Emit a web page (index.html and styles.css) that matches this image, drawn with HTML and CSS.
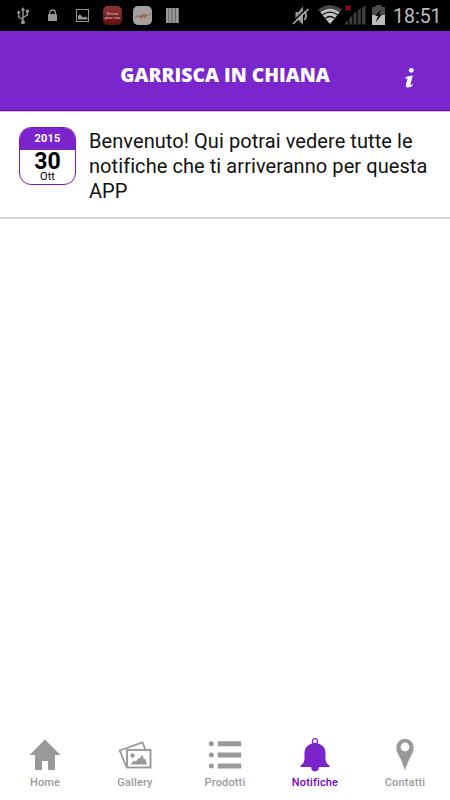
FILE: index.html
```html
<!DOCTYPE html>
<html lang="it">
<head>
    <meta charset="UTF-8">
    <meta name="viewport" content="width=device-width, initial-scale=1.0">
    <title>Garrisca in Chiana</title>
    <link rel="stylesheet" href="styles.css">
</head>
<body>
    <!-- Status Bar -->
    <div class="status-bar">
        <div class="status-left">
            <svg width="30" height="31" viewBox="0 0 30 31">
                <g fill="none" stroke="#969696" stroke-width="1.400">
                    <path d="M15 10v12M15 19.500l-4.300-2.500v-4M15 17.500l4.300-2.500v-4"/>
                </g>
                <g fill="#969696">
                    <path d="M15 7l2.200 3.500h-4.400z"/>
                    <circle cx="15" cy="22.200" r="2"/>
                    <circle cx="10.700" cy="12.300" r="1.500"/>
                    <path d="M17.900 9.800h2.900v2.900h-2.900z"/>
                </g>
            </svg>
            <svg width="30" height="31" viewBox="0 0 30 31">
                <rect x="10" y="14" width="9" height="7" rx="0.6" fill="#969696"/>
                <path d="M11.700 14.500v-1.700a2.800 2.800 0 0 1 5.600 0v1.700" fill="none" stroke="#969696" stroke-width="1.300"/>
            </svg>
            <svg width="30" height="31" viewBox="0 0 30 31">
                <rect x="8.500" y="9.500" width="12" height="12" fill="none" stroke="#969696"/>
                <path d="M10 19.500v-4l2-1 3 3 2-1 2.500 1.500v1.500z" fill="#969696"/>
            </svg>
            <svg width="30" height="31" viewBox="0 0 30 31">
                <defs>
                    <linearGradient id="redApp" x2="0" y2="1">
                        <stop offset="0" stop-color="#91343a"/>
                        <stop offset="1" stop-color="#600f10"/>
                    </linearGradient>
                </defs>
                <rect x="5" y="6" width="19" height="19" rx="5" fill="url(#redApp)"/>
                <text class="app-text" x="14.500" y="14.500">Deluxe</text>
                <text class="app-text" x="14.500" y="18.500">pour vos</text>
            </svg>
            <svg width="30" height="31" viewBox="0 0 30 31">
                <rect x="5" y="6" width="19" height="19" rx="5" fill="#a3a1a0"/>
                <path d="M11 17l1.500-2 1.500.5.5-3 1.500 2 2-1 .5 2.500-1 3-2-1.500-2 1.500z" fill="#c0703a"/>
                <path d="M7 17.500l3-2v1.500l3-1.500v2l3-3v2l3-1.500v1l4-2.500" fill="none" stroke="#6e5f59" stroke-width="0.700"/>
            </svg>
            <svg width="30" height="31" viewBox="0 0 30 31">
                <path d="M8 8h13v15h-13z" fill="#666"/>
                <path d="M8 8h2.300v15h-2.300zM11.200 8h2.300v15h-2.300zM14.600 8h2.300v15h-2.300zM18 8h2.300v15h-2.300z" fill="#999"/>
            </svg>
        </div>
        <div class="status-right">
            <svg width="18" height="31" viewBox="0 0 18 31">
                <path d="M3.500 12h3l4.500-5.500v18.500l-4.500-5h-3z" fill="#9a9a9a"/>
                <path d="M12.500 11q3 4.500 0 9" fill="none" stroke="#9a9a9a" stroke-width="2"/>
                <path d="M0 22.500L15.500 7.500" stroke="#000" stroke-width="1.500"/>
                <path d="M1 24L16.500 9" stroke="#b0b0b0" stroke-width="1.500"/>
            </svg>
            <svg width="24" height="31" viewBox="0 0 24 31">
                <path d="M0 9.500Q12 1 24 9.500L12 24z" fill="#484848"/>
                <path d="M2.500 12.500Q12 5 21.500 12.500L12 24z" fill="#c2c2c2"/>
                <path d="M4.500 14.700Q12 9.500 19.500 14.700M7.500 18.200Q12 14.800 16.500 18.200" fill="none" stroke="#111" stroke-width="1.300"/>
            </svg>
            <svg class="signal" width="21" height="31" viewBox="0 0 21 31">
                <path d="M0 24.500v-1.500l3-3v4.500zM4.200 24.500v-6l3-3v9zM8.500 24.500v-10.500l3-3v13.500zM12.800 24.500v-14l3-3v17zM17 24.500v-16.500l3.500-3v19.500z" fill="#3c3c3c"/>
                <path d="M.5 5.500l5 5M5.500 5.500l-5 5" stroke="#b50d0d" stroke-width="1.500"/>
            </svg>
            <svg class="battery" width="13" height="31" viewBox="0 0 13 31">
                <path d="M0 7h3.500v-2h6v2h3.500v8h-13z" fill="#4c4c4c"/>
                <path d="M0 15h13v10h-13z" fill="#bcbcbc"/>
                <path d="M9.500 9L3 16h3l-2.500 6.500L10 14.500H7z" fill="#111"/>
            </svg>
            <span class="clock">18:51</span>
        </div>
    </div>

    <!-- Header -->
    <div class="header">
        <h1>GARRISCA IN CHIANA</h1>
        <svg class="info" width="12" height="22" viewBox="0 0 12 22">
            <circle cx="7.300" cy="3.300" r="2.400" fill="#fff"/>
            <path d="M1 10.500Q3.500 8.800 8.800 8.500L6.500 17.300Q6.300 18.700 8.700 17.200L9 18.200Q6.500 20.500 3.600 20.500Q1.200 20.500 1.900 17.500L3.400 12Q3.600 11 1.200 11.500z" fill="#fff"/>
        </svg>
    </div>

    <!-- Notification List -->
    <div class="content">
        <div class="notification">
            <div class="date-box">
                <div class="year">2015</div>
                <div class="day">30</div>
                <div class="month">Ott</div>
            </div>
            <p>Benvenuto! Qui potrai vedere tutte le notifiche che ti arriveranno per questa APP</p>
        </div>
    </div>

    <!-- Bottom Tabs -->
    <div class="tabs">
        <div class="tab">
            <svg width="36" height="36" viewBox="0 0 36 36">
                <path d="M18 2.500L33.500 18H28v15h-7v-9h-6v9H8V18H2.500z" fill="#999"/>
            </svg>
            <span>Home</span>
        </div>
        <div class="tab">
            <svg width="36" height="36" viewBox="0 0 36 36">
                <path d="M9.500 30L2.700 13.500L25.500 5.300L28.500 13" fill="none" stroke="#999" stroke-width="1.800"/>
                <rect x="10" y="13" width="23.500" height="17.500" fill="#fff" stroke="#999" stroke-width="1.900"/>
                <circle cx="15.500" cy="18.500" r="2.200" fill="#999"/>
                <path d="M13.500 27.500l3.500-4 2 1 2.500-3.500 1.500.5 2-4 2 4.500 1.500 0 1.500 5.500z" fill="#999"/>
            </svg>
            <span>Gallery</span>
        </div>
        <div class="tab">
            <svg width="36" height="36" viewBox="0 0 36 36">
                <g fill="#999">
                    <circle cx="4.300" cy="6.700" r="2.500"/>
                    <circle cx="4.300" cy="18" r="2.500"/>
                    <circle cx="4.300" cy="29" r="2.500"/>
                    <path d="M10.800 4.200h23.400v5h-23.400zM10.800 15.500h23.400v5h-23.400zM10.800 26.500h23.400v5h-23.400z"/>
                </g>
            </svg>
            <span>Prodotti</span>
        </div>
        <div class="tab active">
            <svg width="36" height="36" viewBox="0 0 36 36">
                <circle cx="18" cy="4.200" r="2.600" fill="none" stroke="#7b24cc" stroke-width="1.200"/>
                <path d="M14 6.700Q18 5.500 22 6.700Q28 9 28.500 15V22Q28.500 26 32.500 28.500V30H22Q21.500 34.500 18 34.500T14 30H3.500V28.500Q7.500 26 7.500 22V15Q8 9 14 6.700z" fill="#7b24cc"/>
            </svg>
            <span>Notifiche</span>
        </div>
        <div class="tab">
            <svg width="36" height="36" viewBox="0 0 36 36">
                <path d="M18 33.500Q15.500 25 11 17Q9.300 14 9.300 10.500A8.700 8.800 0 0 1 26.700 10.500Q26.700 14 25 17Q20.500 25 18 33.500z" fill="#999"/>
                <circle cx="18" cy="10" r="4.400" fill="#fff"/>
            </svg>
            <span>Contatti</span>
        </div>
    </div>
</body>
</html>
```
FILE: styles.css
```css
/* General Styles */
* {
    box-sizing: border-box;
}

body {
    margin: 0;
    font-family: Roboto, sans-serif;
    background-color: #fff;
    display: flex;
    flex-direction: column;
    height: 100vh;
    overflow: hidden;
}

svg {
    display: block;
    flex: none;
}

/* Status Bar */
.status-bar {
    display: flex;
    justify-content: space-between;
    height: 31px;
    flex: none;
    padding: 0 9px 0 8px;
    background-color: #000;
}

.status-left,
.status-right {
    display: flex;
}

.app-text {
    font-size: 4px;
    font-weight: bold;
    fill: #c4a09f;
    text-anchor: middle;
}

.status-right svg {
    margin-right: 8px;
}

.status-right .signal {
    margin-left: -5px;
    margin-right: 6px;
}

.clock {
    width: 48px;
    font-size: 19.5px;
    line-height: 33px;
    color: #bebebe;
    white-space: nowrap;
}

/* Header */
.header {
    display: flex;
    align-items: center;
    justify-content: center;
    position: relative;
    height: 80px;
    flex: none;
    padding-top: 9px;
    background-color: #7b26cc;
    border-bottom: 1px solid #7700cc;
    box-shadow: 0 1px 0 #ccc;
}

.header h1 {
    margin: 0;
    font-family: "Open Sans", sans-serif;
    font-size: 19.3px;
    font-weight: 800;
    line-height: 26px;
    color: #fff;
    white-space: nowrap;
}

/* Sits over the right end of the centered title */
.info {
    position: absolute;
    top: 36px;
    right: 34px;
}

/* Notification List */
.content {
    flex: 1;
}

.notification {
    display: flex;
    height: 108px;
    padding: 16px 15px 0 19px;
    border-bottom: 2px solid #d5d5d5;
}

.notification p {
    margin: 2px 0 0 13px;
    font-size: 20px;
    line-height: 25px;
    letter-spacing: 0.07px;
    color: #111;
}

.date-box {
    width: 57px;
    height: 58px;
    flex: none;
    border: 1px solid #7b16cc;
    border-radius: 12px;
    overflow: hidden;
    text-align: center;
    color: #000;
}

.year {
    height: 22px;
    background-color: #7b24cc;
    color: #fff;
    font-size: 11px;
    font-weight: bold;
    letter-spacing: 0.2px;
    line-height: 22px;
}

.day {
    padding-top: 2px;
    font-size: 23px;
    font-weight: bold;
    line-height: 20px;
}

.month {
    font-size: 11px;
    line-height: 9px;
}

/* Bottom Tabs */
.tabs {
    display: flex;
    height: 63px;
    flex: none;
}

.tab {
    display: flex;
    flex: 1;
    flex-direction: column;
    align-items: center;
    color: #999;
    font-size: 11px;
    font-weight: 500;
    letter-spacing: 0.15px;
    line-height: 13px;
}

.tab span {
    margin-top: 3px;
}

.tab.active {
    color: #7700cc;
}
```
